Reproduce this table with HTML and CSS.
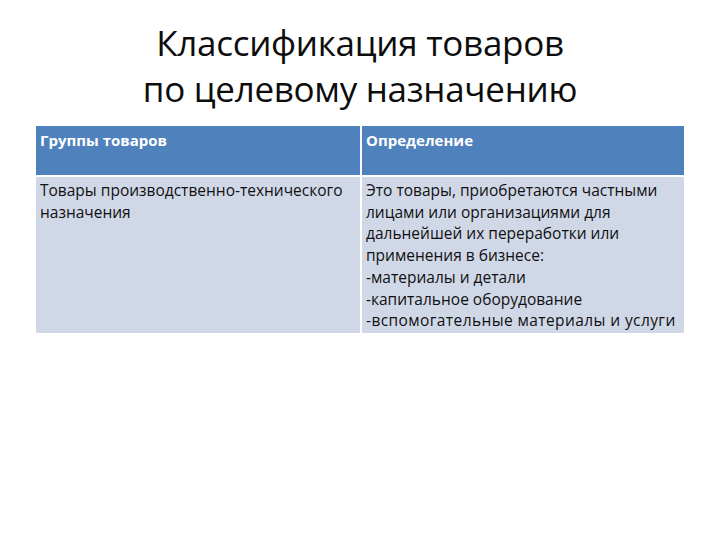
FILE: index.html
```html
<!DOCTYPE html>
<html lang="ru">
<head>
<meta charset="utf-8">
<link rel="stylesheet" href="styles.css">
</head>
<body>
<div class="slide">
  <h1 class="title">Классификация товаров<br>по целевому назначению</h1>
  <div class="grid">
    <div class="cell head">Группы товаров</div>
    <div class="cell head">Определение</div>
    <div class="cell body">Товары производственно-технического назначения</div>
    <div class="cell body">Это товары, приобретаются частными лицами или организациями для дальнейшей их переработки или применения в бизнесе:<br>-материалы и детали<br>-капитальное оборудование<br><span class="wide">-вспомогательные материалы и услуги</span></div>
  </div>
</div>
</body>
</html>
```
FILE: styles.css
```css
html, body {
  margin: 0;
  padding: 0;
  background: #ffffff;
}
.slide {
  width: 720px;
  height: 540px;
  padding-top: 20px;
  box-sizing: border-box;
  font-family: "Open Sans", "Noto Sans", sans-serif;
}
.title {
  margin: 0 0 14px 0;
  text-align: center;
  font-weight: 400;
  font-size: 35px;
  line-height: 46px;
  color: #0d0d0d;
  letter-spacing: -0.3px;
}
.grid {
  margin-left: 36px;
  display: grid;
  grid-template-columns: 324px 322px;
  grid-template-rows: 49px auto;
  gap: 2px;
}
.cell {
  font-size: 15.5px;
  line-height: 21.7px;
  padding: 3px 4px 1px 4px;
}
.head {
  background: #4f81bd;
  color: #ffffff;
  font-weight: 700;
  font-size: 15px;
  padding-top: 4px;
}
.body {
  background: #d0d8e8;
  color: #111111;
}
.wide {
  letter-spacing: 0.4px;
}
```
